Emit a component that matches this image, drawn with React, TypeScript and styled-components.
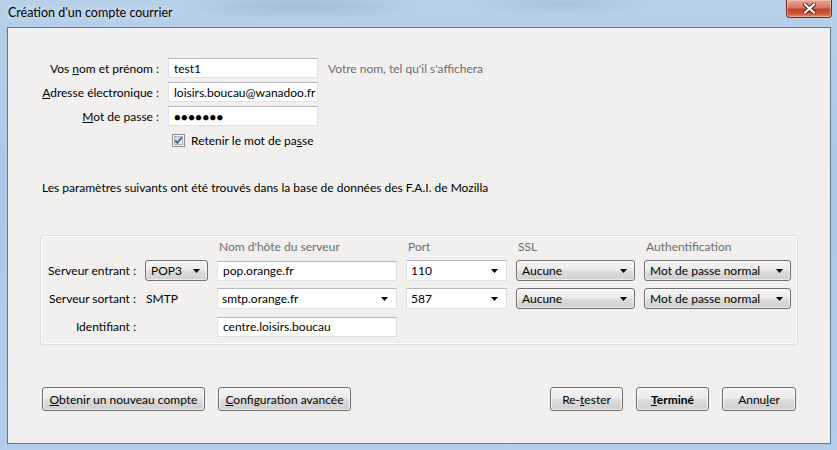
import React, {FC, ReactNode} from 'react';
import styled, {createGlobalStyle} from 'styled-components';

const GlobalStyle = createGlobalStyle`
  html, body {
    margin: 0;
    padding: 0;
    width: 837px;
    height: 450px;
    overflow: hidden;
  }
  body {
    font-family: Lato, "Open Sans", "Liberation Sans", sans-serif;
    font-size: 12px;
    color: #000;
  }
`;

const Window = styled.div`
  width: 837px;
  height: 450px;
  box-sizing: border-box;
  padding: 0 6px 6px 7px;
  display: flex;
  flex-direction: column;
  background:
    radial-gradient(ellipse 120px 14px at 300px 6px, rgba(120, 150, 185, 0.35), transparent),
    radial-gradient(ellipse 90px 12px at 560px 4px, rgba(120, 150, 185, 0.25), transparent),
    linear-gradient(to bottom, #b7d0ea 0%, #a9c7e6 40%, #b3cdea 100%);
`;

const TitleBar = styled.div`
  height: 27px;
  display: flex;
  align-items: flex-start;
  justify-content: space-between;
`;

const Title = styled.span`
  margin-top: 5px;
  margin-left: 1px;
  font-size: 12.5px;
  color: #000;
  text-shadow: 0 0 8px rgba(255, 255, 255, 0.9);
`;

const CloseButton = styled.div`
  width: 46px;
  height: 18px;
  margin-right: -1px;
  box-sizing: border-box;
  border: 1px solid #6e2c20;
  border-top: none;
  border-radius: 0 0 4px 4px;
  background: linear-gradient(
    to bottom,
    #e9a997 0%,
    #d5765f 45%,
    #c2432b 55%,
    #d0553a 80%,
    #e58a67 100%
  );
  display: flex;
  align-items: center;
  justify-content: center;
  box-shadow: inset 0 0 0 1px rgba(255, 220, 210, 0.45);
`;

const Client = styled.div`
  flex: 1;
  box-sizing: border-box;
  border: 1px solid #60799a;
  background: #f1f0ee;
  display: flex;
  flex-direction: column;
`;

const AccountForm = styled.div`
  margin-top: 30px;
  display: grid;
  grid-template-columns: 151px 150px auto;
  grid-auto-rows: 20px;
  column-gap: 9px;
  row-gap: 4px;
  align-items: center;
`;

const Label = styled.label<{$align?: 'left' | 'right'}>`
  text-align: ${(p) => p.$align || 'right'};
  white-space: nowrap;
  color: #000;
`;

const Hint = styled.span`
  color: #6d6d6d;
  padding-left: 1px;
  white-space: nowrap;
`;

const TextField = styled.div<{$secret?: boolean}>`
  height: 20px;
  box-sizing: border-box;
  background: #fff;
  border: 1px solid #dde2e8;
  border-top-color: #b5b8bf;
  padding: 0 5px;
  display: flex;
  align-items: center;
  white-space: nowrap;
  overflow: hidden;
  font-size: ${(p) => (p.$secret ? '11px' : '12px')};
  letter-spacing: ${(p) => (p.$secret ? '0.5px' : 'normal')};
`;

const CheckRow = styled.div`
  grid-column: 2 / 4;
  margin-top: 1px;
  margin-left: 4px;
  display: flex;
  align-items: center;
  gap: 6px;
`;

const Notice = styled.p`
  margin: 30px 0 0 34px;
  line-height: 16px;
`;

const ServerBox = styled.div`
  margin: 39px 32px 0 32px;
  box-sizing: border-box;
  border: 1px solid #d5dfe5;
  border-radius: 3px;
  box-shadow: inset 0 0 0 1px #fbfbfb;
  padding: 3px 6px 7px 7px;
  display: grid;
  grid-template-columns: 88px 63px 180px 101px 119px 147px;
  grid-template-rows: 14px 21px 21px 21px;
  column-gap: 9px;
  row-gap: 7px;
  align-items: center;
`;

const ColumnHead = styled.span`
  color: #6d6d6d;
  white-space: nowrap;
  padding-left: 2px;
`;

const Static = styled.span`
  padding-left: 1px;
`;

const DropButton = styled.div`
  height: 21px;
  box-sizing: border-box;
  border: 1px solid #707070;
  border-radius: 3px;
  background: linear-gradient(to bottom, #f3f3f3 0%, #ebebeb 48%, #dddddd 52%, #cfcfcf 100%);
  box-shadow: inset 0 0 0 1px rgba(255, 255, 255, 0.6);
  padding: 0 7px 0 5px;
  display: flex;
  align-items: center;
  justify-content: space-between;
  white-space: nowrap;
`;

const ComboField = styled(TextField)`
  height: 21px;
  justify-content: space-between;
  padding: 0 8px 0 4px;
`;

const ButtonBar = styled.div`
  margin: 42px 34px 0 34px;
  display: flex;
  justify-content: space-between;
`;

const ButtonGroup = styled.div`
  display: flex;
  gap: 13px;
`;

const PushButton = styled.button<{$width: number; $default?: boolean}>`
  width: ${(p) => p.$width}px;
  height: 24px;
  box-sizing: border-box;
  font-family: inherit;
  font-size: 12px;
  font-weight: ${(p) => (p.$default ? 700 : 400)};
  color: #000;
  border: 1px solid #707070;
  border-radius: 3px;
  background: linear-gradient(to bottom, #f3f3f3 0%, #ebebeb 48%, #dddddd 52%, #cfcfcf 100%);
  box-shadow: inset 0 0 0 1px rgba(255, 255, 255, 0.7);
  padding: 0 4px;
  white-space: nowrap;
`;

const Arrow: FC = () => (
  <svg width="7" height="4" viewBox="0 0 7 4">
    <path d="M0 0h7L3.5 4z" fill="#000" />
  </svg>
);

const CheckBox: FC = () => (
  <svg width="13" height="13" viewBox="0 0 13 13">
    <defs>
      <linearGradient id="cbg" x1="0" y1="0" x2="1" y2="1">
        <stop offset="0" stopColor="#cbcfd5" />
        <stop offset="1" stopColor="#f7f7f7" />
      </linearGradient>
    </defs>
    <rect x="0.5" y="0.5" width="12" height="12" fill="#f4f4f4" stroke="#8e8f8f" />
    <rect x="2.5" y="2.5" width="8" height="8" fill="url(#cbg)" stroke="#aeb3b9" />
    <path d="M3.2 6.4 L5.4 8.9 L9.8 3.4" fill="none" stroke="#4a5f8a" strokeWidth="1.7" />
  </svg>
);

const CloseGlyph: FC = () => (
  <svg width="13" height="11" viewBox="0 0 13 11">
    <path d="M2 1.5 L11 9.5 M11 1.5 L2 9.5" stroke="#5a1d14" strokeWidth="4" strokeLinecap="square" />
    <path d="M2 1.5 L11 9.5 M11 1.5 L2 9.5" stroke="#fff" strokeWidth="2.2" strokeLinecap="square" />
  </svg>
);

const Key: FC<{children: ReactNode}> = ({children}) => <u>{children}</u>;

const App: FC = () => (
  <>
    <GlobalStyle />
    <Window>
      <TitleBar>
        <Title>Création d'un compte courrier</Title>
        <CloseButton>
          <CloseGlyph />
        </CloseButton>
      </TitleBar>
      <Client>
        <AccountForm>
          <Label>
            Vos <Key>n</Key>om et prénom :
          </Label>
          <TextField>test1</TextField>
          <Hint>Votre nom, tel qu'il s'affichera</Hint>

          <Label>
            <Key>A</Key>dresse électronique :
          </Label>
          <TextField>loisirs.boucau@wanadoo.fr</TextField>
          <span />

          <Label>
            <Key>M</Key>ot de passe :
          </Label>
          <TextField $secret>●●●●●●●</TextField>
          <span />

          <CheckRow>
            <CheckBox />
            <span>
              Retenir le mot de pa<Key>s</Key>se
            </span>
          </CheckRow>
        </AccountForm>

        <Notice>Les paramètres suivants ont été trouvés dans la base de données des F.A.I. de Mozilla</Notice>

        <ServerBox>
          <span />
          <span />
          <ColumnHead>Nom d'hôte du serveur</ColumnHead>
          <ColumnHead>Port</ColumnHead>
          <ColumnHead>SSL</ColumnHead>
          <ColumnHead>Authentification</ColumnHead>

          <Label>Serveur entrant :</Label>
          <DropButton>
            POP3
            <Arrow />
          </DropButton>
          <TextField>pop.orange.fr</TextField>
          <ComboField>
            110
            <Arrow />
          </ComboField>
          <DropButton>
            Aucune
            <Arrow />
          </DropButton>
          <DropButton>
            Mot de passe normal
            <Arrow />
          </DropButton>

          <Label>Serveur sortant :</Label>
          <Static>SMTP</Static>
          <ComboField>
            smtp.orange.fr
            <Arrow />
          </ComboField>
          <ComboField>
            587
            <Arrow />
          </ComboField>
          <DropButton>
            Aucune
            <Arrow />
          </DropButton>
          <DropButton>
            Mot de passe normal
            <Arrow />
          </DropButton>

          <Label>Identifiant :</Label>
          <span />
          <TextField>centre.loisirs.boucau</TextField>
        </ServerBox>

        <ButtonBar>
          <ButtonGroup>
            <PushButton $width={163}>
              <Key>O</Key>btenir un nouveau compte
            </PushButton>
            <PushButton $width={133}>
              <Key>C</Key>onfiguration avancée
            </PushButton>
          </ButtonGroup>
          <ButtonGroup>
            <PushButton $width={73}>
              Re-<Key>t</Key>ester
            </PushButton>
            <PushButton $width={73} $default>
              <Key>T</Key>erminé
            </PushButton>
            <PushButton $width={74}>
              Annu<Key>l</Key>er
            </PushButton>
          </ButtonGroup>
        </ButtonBar>
      </Client>
    </Window>
  </>
);

export default App;
